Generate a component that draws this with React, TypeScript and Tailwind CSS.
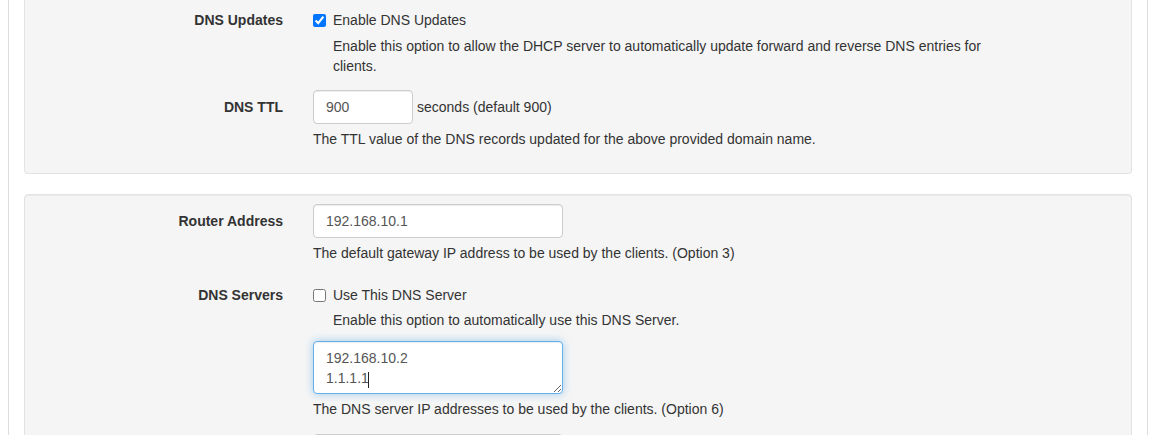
import React from "react";

const font = { fontFamily: '"Liberation Sans", Arial, sans-serif' };

const Label = ({ children, pad }: { children: React.ReactNode; pad?: boolean }) => (
  <div
    className={`w-[258px] shrink-0 text-right font-bold text-[14px] leading-5 text-[#333] ${
      pad ? "pt-[7px]" : ""
    }`}
  >
    {children}
  </div>
);

const Help = ({ children, indent }: { children: React.ReactNode; indent?: boolean }) => (
  <p className={`mt-[5px] text-[14px] leading-5 text-[#333] ${indent ? "pl-5" : ""}`}>{children}</p>
);

const inputCls =
  "h-[34px] rounded-[4px] border border-[#ccc] bg-white px-3 text-[14px] text-[#555] shadow-[inset_0_1px_1px_rgba(0,0,0,0.075)] outline-none";

const Check = ({ checked, label }: { checked?: boolean; label: string }) => (
  <label className="flex h-5 items-center text-[14px] text-[#333]">
    <input type="checkbox" defaultChecked={checked} className="m-0 h-[13px] w-[13px]" />
    <span className="ml-[7px]">{label}</span>
  </label>
);

export default function App() {
  return (
    <div className="h-[435px] overflow-hidden bg-white" style={font}>
      <div className="ml-2 h-full w-[1140px] border-x border-[#ddd] px-[15px]">
        {/* first well, top cut off */}
        <div className="rounded-b-[4px] border-x border-b border-[#e3e3e3] bg-[#f5f5f5] pt-[10px] pb-6">
          <div className="flex gap-[30px]">
            <Label>DNS Updates</Label>
            <div className="w-[690px]">
              <Check checked label="Enable DNS Updates" />
              <p className="mt-[6px] pl-5 text-[14px] leading-5 text-[#333]">
                Enable this option to allow the DHCP server to automatically update forward and reverse DNS
                entries for clients.
              </p>
            </div>
          </div>
          <div className="mt-[14px] flex gap-[30px]">
            <Label pad>DNS TTL</Label>
            <div className="w-[690px]">
              <div className="flex items-center">
                <input className={`${inputCls} w-[100px]`} defaultValue="900" />
                <span className="ml-[4px] text-[14px] text-[#333]">seconds (default 900)</span>
              </div>
              <Help>The TTL value of the DNS records updated for the above provided domain name.</Help>
            </div>
          </div>
        </div>

        {/* second well */}
        <div className="mt-5 rounded-[4px] border border-[#e3e3e3] bg-[#f5f5f5] pt-[9px] pb-6 shadow-[inset_0_1px_1px_rgba(0,0,0,0.05)]">
          <div className="flex gap-[30px]">
            <Label pad>Router Address</Label>
            <div className="w-[690px]">
              <input className={`${inputCls} w-[250px]`} defaultValue="192.168.10.1" />
              <Help>The default gateway IP address to be used by the clients. (Option 3)</Help>
            </div>
          </div>
          <div className="mt-[22px] flex gap-[30px]">
            <Label>DNS Servers</Label>
            <div className="w-[690px]">
              <Check label="Use This DNS Server" />
              <Help indent>Enable this option to automatically use this DNS Server.</Help>
              <div className="relative mt-[11px] w-[250px]">
                <textarea
                  className="block h-[53px] w-[250px] rounded-[4px] border border-[#66afe9] bg-white px-3 py-[6px] text-[14px] leading-5 text-[#555] shadow-[inset_0_1px_1px_rgba(0,0,0,0.075),0_0_8px_rgba(102,175,233,0.6)] outline-none"
                  defaultValue={"192.168.10.2\n1.1.1.1"}
                />
                {/* text caret */}
                <span className="pointer-events-none absolute left-[55px] top-[31px] h-[16px] w-px bg-[#222]" />
              </div>
              <Help>The DNS server IP addresses to be used by the clients. (Option 6)</Help>
              <input className={`${inputCls} mt-[15px] w-[250px]`} defaultValue="" />
            </div>
          </div>
        </div>
      </div>
    </div>
  );
}
